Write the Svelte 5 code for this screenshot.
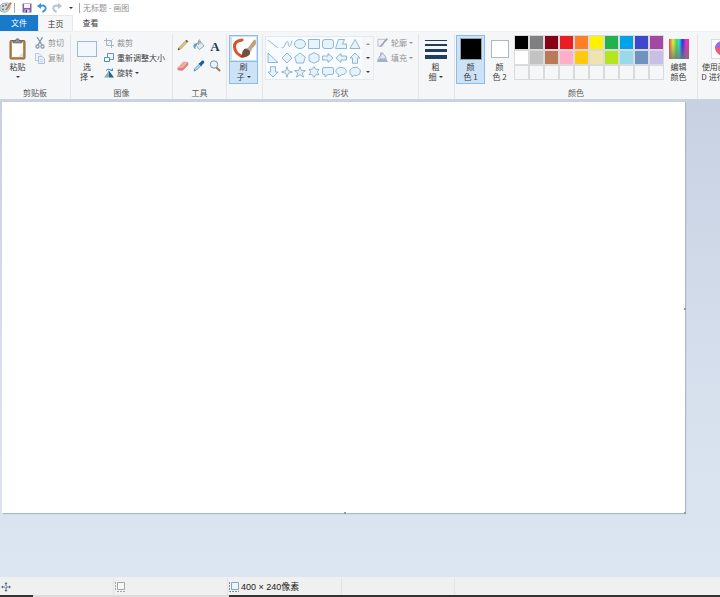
<script lang="ts">
	const palette = [
		'#000000', '#7f7f7f', '#880015', '#ed1c24', '#ff7f27', '#fff200', '#22b14c', '#00a2e8', '#3f48cc', '#a349a4',
		'#ffffff', '#c3c3c3', '#b97a57', '#ffaec9', '#ffc90e', '#efe4b0', '#b5e61d', '#99d9ea', '#7092be', '#c8bfe7',
		'', '', '', '', '', '', '', '', '', ''
	];

	const shapes = [
		{ name: '直线', d: 'M1 2L11 10' },
		{ name: '曲线', d: 'M0.5 9.5C3 11 4 6 5.5 4C8 1 6.500 9 8.500 8.500C10.500 8 10 3 11.500 2.500' },
		{ name: '椭圆形', d: 'M0.5 6A5.500 4.500 0 1 1 11.500 6A5.500 4.500 0 1 1 0.5 6Z' },
		{ name: '矩形', d: 'M0.5 1.500H11.500V10.500H0.5Z' },
		{ name: '圆角矩形', d: 'M3 1.500H9Q11.500 1.500 11.500 4V8Q11.500 10.500 9 10.500H3Q0.5 10.500 0.5 8V4Q0.5 1.500 3 1.500Z' },
		{ name: '多边形', d: 'M3.500 1.500H9.500L7.500 6H11.500V10.500H0.5Z' },
		{ name: '三角形', d: 'M6 1.500L11 10.500H1Z' },
		{ name: '直角三角形', d: 'M1 1V10.500H11Z' },
		{ name: '菱形', d: 'M6 1L11 6L6 11L1 6Z' },
		{ name: '五边形', d: 'M6 1L11.300 5L9.500 11H2.500L0.700 5Z' },
		{ name: '六边形', d: 'M6 0.700L11 3.200V8.800L6 11.300L1 8.800V3.200Z' },
		{ name: '右箭头', d: 'M0.5 4H6V1.500L11 6L6 10.500V8H0.5Z' },
		{ name: '左箭头', d: 'M11.500 4H6V1.500L1 6L6 10.500V8H11.500Z' },
		{ name: '向上箭头', d: 'M6 1L11 6H8.500V11.300H3.500V6H1Z' },
		{ name: '向下箭头', d: 'M6 11L11 6H8.500V0.700H3.500V6H1Z' },
		{ name: '四角星形', d: 'M6 0.700L7.300 4.700L11.300 6L7.300 7.300L6 11.300L4.700 7.300L0.700 6L4.700 4.700Z' },
		{ name: '五角星形', d: 'M6 0.700L7.400 4.600H11.500L8.200 7L9.500 11.200L6 8.600L2.500 11.200L3.800 7L0.500 4.600H4.600Z' },
		{ name: '六角星形', d: 'M6 0.500L7.700 3.300H11L9.300 6L11 8.700H7.700L6 11.500L4.300 8.700H1L2.700 6L1 3.300H4.300Z' },
		{ name: '圆角矩形标注', d: 'M2 1.500H10Q11.500 1.500 11.500 3V7Q11.500 8.500 10 8.500H6L3 11V8.500H2Q0.5 8.500 0.5 7V3Q0.5 1.500 2 1.500Z' },
		{ name: '椭圆形标注', d: 'M3.500 8.300C-0.500 6.800 0 1.500 6 1.500C13 1.500 13 8.700 6.500 8.700L3 11Z' },
		{ name: '云形标注', d: 'M3 9Q0.5 8.800 1 6.500Q0 3.500 2.500 3Q3.500 0.700 6 1.500Q9 0.500 9.700 2.700Q12.300 3.500 11.200 6Q11.500 8.800 8.500 9Q7 10.200 5.300 9.200L3 11Z' }
	];

	let color1 = $state('#000000');
	let color2 = $state('#ffffff');
	let activeTab = $state('home');
	let canvasWidth = 400;
	let canvasHeight = 240;

	function pickColor(color: string) {
		if (color) color1 = color;
	}

	function pickBackground(e: MouseEvent, color: string) {
		e.preventDefault();
		if (color) color2 = color;
	}
</script>

<div class="window">
	<header class="titlebar">
		<svg width="13" height="13" viewBox="0 0 13 13">
			<path d="M0 5Q1 2 6 2Q11 2 10 7Q8 12 3 11Q0 11 0 8Z" fill="#c9dbe3" stroke="#8d9da6" stroke-width=".7" />
			<circle cx="3" cy="5" r="1" fill="#d05a50" />
			<circle cx="3" cy="8.500" r="1" fill="#4c9c63" />
			<circle cx="6" cy="4" r="1" fill="#4b82c4" />
			<path d="M5 9L10 1L12 2L7 9Z" fill="#b68a50" />
		</svg>
		<span class="bar first"></span>
		<button class="quick" aria-label="保存">
			<svg width="10" height="10" viewBox="0 0 10 10">
				<path d="M.5 .5H9.500V9.500H.5Z" fill="#7f62a8" />
				<path d="M2 1H8V5H2Z" fill="#f5f2fa" />
				<path d="M2.500 6.500H7.500V9.500H2.500Z" fill="#ddd4ea" />
				<path d="M3.500 7H5V9.500H3.500Z" fill="#503878" />
			</svg>
		</button>
		<button class="quick" aria-label="撤消">
			<svg width="10" height="10" viewBox="0 0 10 10">
				<path d="M3 3C7 1.500 9 3.500 8.500 6Q8 8 5.500 9" fill="none" stroke="#3b94d4" stroke-width="2" />
				<path d="M0 3L4 0V6Z" fill="#3b94d4" />
			</svg>
		</button>
		<button class="quick" aria-label="重做">
			<svg width="10" height="10" viewBox="0 0 10 10">
				<path d="M7 3C3 1.500 1 3.500 1.500 6Q2 8 4.500 9" fill="none" stroke="#b6c0cf" stroke-width="2" />
				<path d="M10 3L6 0V6Z" fill="#b6c0cf" />
			</svg>
		</button>
		<button class="quick narrow" aria-label="自定义快速访问工具栏"><i class="arrow"></i></button>
		<span class="bar"></span>
		<span class="title">无标题 - 画图</span>
	</header>

	<nav class="tabs">
		<button class="tab file">文件</button>
		<button class="tab" class:active={activeTab === 'home'} onclick={() => (activeTab = 'home')}>主页</button>
		<button class="tab" class:active={activeTab === 'view'} onclick={() => (activeTab = 'view')}>查看</button>
	</nav>

	<div class="ribbon">
		<section class="group clipboard">
			<div class="content">
				<button class="large">
					<span class="picture">
						<svg width="17" height="22" viewBox="0 0 17 22">
							<rect x="1" y="2.500" width="15" height="18.500" rx="1" fill="#b98b52" stroke="#8c6535" />
							<path d="M3 4.500H14V19H3Z" fill="#fdfdfd" />
							<path d="M9 19H14V14Z" fill="#dde3ea" />
							<path d="M4.500 5V3H6.500Q6.500 .7 8.500 .7T10.500 3H12.500V5Z" fill="#8b929a" stroke="#5f666d" stroke-width=".7" />
						</svg>
					</span>
					<span>粘贴</span>
					<i class="arrow low"></i>
				</button>
				<div class="stack">
					<button class="small" disabled>
						<svg width="10" height="12" viewBox="0 0 10 12">
							<path d="M2 0L7 8M7.500 0L3 8" stroke="#8595ab" stroke-width="1.300" fill="none" />
							<circle cx="2.500" cy="9.500" r="1.600" fill="none" stroke="#8595ab" stroke-width="1.200" />
							<circle cx="7.500" cy="9.500" r="1.600" fill="none" stroke="#8595ab" stroke-width="1.200" />
						</svg>
						剪切
					</button>
					<button class="small" disabled>
						<svg width="10" height="12" viewBox="0 0 10 12">
							<path d="M.5 1.500H4L6 3.500V8.500H.5Z" fill="#eef3f9" stroke="#b9c8dc" />
							<path d="M3.500 4.500H7.500L9.500 6.500V11.500H3.500Z" fill="#e6eef8" stroke="#b1c1d7" />
							<path d="M5 7.500H8M5 9.500H8" stroke="#c7d5e7" />
						</svg>
						复制
					</button>
				</div>
			</div>
			<h2>剪贴板</h2>
		</section>

		<section class="group image">
			<div class="content">
				<button class="large">
					<span class="picture">
						<svg width="20" height="16" viewBox="0 0 20 16">
							<rect x=".5" y=".5" width="19" height="15" fill="#f1f7fd" stroke="#a1b8cf" />
						</svg>
					</span>
					<span>选<br />择<i class="arrow"></i></span>
				</button>
				<div class="stack">
					<button class="small" disabled>
						<svg width="10" height="10" viewBox="0 0 10 10">
							<path d="M2.500 0V7.500H10M0 2.500H7.500V10" fill="none" stroke="#a4b3c9" />
							<path d="M3 7L9.500 .5" stroke="#b8c4d6" stroke-width=".7" />
						</svg>
						裁剪
					</button>
					<button class="small">
						<svg width="10" height="10" viewBox="0 0 10 10">
							<path d="M3.500 .5H9.500V6.500H3.500Z" fill="#eaf5fd" stroke="#6f93b5" />
							<path d="M.5 4.500H5.500V8.500H.5Z" fill="#fff" stroke="#4f8ebc" />
						</svg>
						重新调整大小
					</button>
					<button class="small">
						<svg width="10" height="10" viewBox="0 0 10 10">
							<path d="M0 9.500H4V4Z" fill="#8da8bd" />
							<path d="M4.500 2V9.500H10Z" fill="#24668b" />
							<path d="M2 2.500Q4 0 7 2" fill="none" stroke="#3793c9" />
							<path d="M6 3H9V0Z" fill="#3793c9" />
						</svg>
						<span>旋转<i class="arrow"></i></span>
					</button>
				</div>
			</div>
			<h2>图像</h2>
		</section>

		<section class="group tools">
			<div class="content tool-grid">
				<button aria-label="铅笔">
					<svg width="12" height="12" viewBox="0 0 12 12">
						<path d="M1 11L2 8.500L9.500 1L11 2.500L3.500 10Z" fill="#e6c979" stroke="#94753d" stroke-width=".6" />
						<path d="M1 11L1.700 9L3 10.300Z" fill="#44403a" />
						<path d="M8.500 2L9.500 1L11 2.500L10 3.500Z" fill="#665a4a" />
					</svg>
				</button>
				<button aria-label="用颜色填充">
					<svg width="12" height="12" viewBox="0 0 12 12">
						<path d="M2.500 5.500L7 2L11 7L6.500 10.500Z" fill="#e4ebf1" stroke="#8796a4" stroke-width=".8" />
						<path d="M5.500 6V1.500Q6 0 7 1.500V5" fill="none" stroke="#8796a4" stroke-width=".8" />
						<path d="M.5 8Q0 4 3 4.500L6 4Q2 6 2.500 10Q1 10 .5 8Z" fill="#5f9ecb" />
					</svg>
				</button>
				<button class="text-tool" aria-label="文本">A</button>
				<button aria-label="橡皮擦">
					<svg width="12" height="12" viewBox="0 0 12 12">
						<path d="M.7 8L6.500 2L11 2.500L11 5L5.500 10.500L1 10Z" fill="#e67f7c" stroke="#d17372" stroke-width=".5" />
						<path d="M.7 8L5.500 8L11 2.500L6.500 2Z" fill="#f3a9a5" />
					</svg>
				</button>
				<button aria-label="颜色选取器">
					<svg width="12" height="12" viewBox="0 0 12 12">
						<path d="M1 11L2 8.500L6.500 4L8 5.500L3.500 10Z" fill="#bce0f5" stroke="#427da8" stroke-width=".8" />
						<path d="M5.500 3.500L6.500 3L9 .7Q11.500 0 11.300 2.700L9 5L8.500 6.500Z" fill="#245b91" />
					</svg>
				</button>
				<button aria-label="放大镜">
					<svg width="12" height="12" viewBox="0 0 12 12">
						<path d="M7.500 7.500L10.500 10.500" stroke="#997c62" stroke-width="2" stroke-linecap="round" />
						<circle cx="5" cy="4.500" r="3.700" fill="#e8f4fb" stroke="#7c91a1" stroke-width="1" />
					</svg>
				</button>
			</div>
			<h2>工具</h2>
		</section>

		<section class="group brushes">
			<div class="content">
				<button class="large checked split">
					<span class="picture">
						<svg width="24" height="23" viewBox="0 0 24 23">
							<path d="M0 0H24V23H0Z" fill="#fafcfe" />
							<path d="M10 3Q2 4 2.500 10T9 19Q14 20 15 16" fill="none" stroke="#d95329" stroke-width="3" stroke-linecap="round" />
							<path d="M16 11L21 4Q23 1 24 4V7L18 14Z" fill="#c3a179" />
							<path d="M14 12L17 10L20 13L17 16Z" fill="#aab0b5" />
							<path d="M10 18Q10 12 14 11.500Q19 13 18 17Q15 21 8 20Z" fill="#785039" />
						</svg>
					</span>
					<span>刷<br />子<i class="arrow"></i></span>
				</button>
			</div>
		</section>

		<section class="group shapes">
			<div class="content">
				<div class="gallery">
					<div class="shape-grid">
						{#each shapes as shape (shape.name)}
							<button aria-label={shape.name}>
								<svg width="12" height="12" viewBox="0 0 12 12"><path d={shape.d} /></svg>
							</button>
						{/each}
					</div>
					<div class="scroll">
						<button aria-label="向上滚动" disabled><i class="arrow up"></i></button>
						<button aria-label="向下滚动"><i class="arrow"></i></button>
						<button aria-label="更多形状"><i class="arrow more"></i></button>
					</div>
				</div>
				<div class="stack">
					<button class="small" disabled>
						<svg width="11" height="11" viewBox="0 0 12 12">
							<path d="M1 2.500H9L6 10H1Z" fill="#eef0f3" stroke="#b6bec9" />
							<path d="M2.500 10.500L10.500 1L12 2.500L4 11Z" fill="#9aa5b3" />
						</svg>
						<span>轮廓<i class="arrow"></i></span>
					</button>
					<button class="small" disabled>
						<svg width="11" height="11" viewBox="0 0 12 12">
							<path d="M2 6L6 1L10 6L6 9Z" fill="#e0e5ef" stroke="#9eabc0" />
							<path d="M1 7H10L12 11H0Z" fill="#a4b1c8" />
							<path d="M4 5V1H6" fill="none" stroke="#9eabc0" />
						</svg>
						<span>填充<i class="arrow"></i></span>
					</button>
				</div>
			</div>
			<h2>形状</h2>
		</section>

		<section class="group size">
			<div class="content">
				<button class="large">
					<span class="picture">
						<svg width="22" height="20" viewBox="0 0 22 20">
							<path d="M0 1H22V2H0ZM0 5H22V7H0ZM0 10H22V13H0ZM0 16H22V20H0Z" fill="#203f5f" />
						</svg>
					</span>
					<span>粗<br />细<i class="arrow"></i></span>
				</button>
			</div>
		</section>

		<section class="group colors">
			<div class="content">
				<button class="large checked">
					<span class="picture"><span class="well first" style:background={color1}></span></span>
					<span>颜<br />色 1</span>
				</button>
				<button class="large">
					<span class="picture"><span class="well" style:background={color2}></span></span>
					<span>颜<br />色 2</span>
				</button>
				<div class="palette">
					{#each palette as color, i (i)}
						<button
							aria-label={color || '自定义颜色'}
							style:background={color || '#f5f6f7'}
							onclick={() => pickColor(color)}
							oncontextmenu={(e) => pickBackground(e, color)}
						></button>
					{/each}
				</div>
				<button class="large">
					<span class="picture"><span class="rainbow"></span></span>
					<span>编辑<br />颜色</span>
				</button>
			</div>
			<h2>颜色</h2>
		</section>

		<section class="group paint3d">
			<div class="content">
				<button class="large">
					<span class="picture">
						<svg width="20" height="20" viewBox="0 0 20 20">
							<rect x=".5" y=".5" width="19" height="19" fill="#fdfdfe" stroke="#d9dce3" />
							<path d="M10 2Q4 4 4 9H10Z" fill="#9c6bd8" />
							<path d="M4 9Q4 13 10 17V9Z" fill="#ee5c74" />
							<path d="M10 2Q16 4 16 9H10Z" fill="#439fe0" />
							<path d="M16 9Q16 13 10 17V9Z" fill="#f4ad41" />
						</svg>
					</span>
					<span>使用画图 3<br />D 进行编辑</span>
				</button>
			</div>
		</section>
	</div>

	<main class="workspace">
		<div class="canvas">
			<span class="handle right"></span>
			<span class="handle bottom"></span>
			<span class="handle corner"></span>
		</div>
	</main>

	<footer class="status">
		<div class="cell">
			<svg width="10" height="10" viewBox="0 0 10 10">
				<path d="M5 1V9M1 5H9" stroke="#596b80" stroke-dasharray="3 1" />
				<path d="M3.500 2L5 0L6.500 2ZM3.500 8L5 10L6.500 8ZM2 3.500L0 5L2 6.500ZM8 3.500L10 5L8 6.500Z" fill="#596b80" />
			</svg>
		</div>
		<div class="cell">
			<svg width="10" height="10" viewBox="0 0 10 10">
				<path d="M2.500 .5H9.500V7.500H2.500Z" fill="#f7f7f8" stroke="#a4a7ac" />
				<path d="M.5 0V8M2 9.500H10" stroke="#a5a8ad" stroke-dasharray="2 1" />
			</svg>
		</div>
		<div class="cell">
			<svg width="10" height="10" viewBox="0 0 10 10">
				<path d="M2.500 .5H9.500V7.500H2.500Z" fill="#eaf6fd" stroke="#8da6ba" />
				<path d="M.5 0V9.500H10V7" fill="none" stroke="#7a8d9e" stroke-dasharray="2 1" />
			</svg>
			<span>{canvasWidth} × {canvasHeight}像素</span>
		</div>
		<div class="cell"></div>
		<div class="cell last"></div>
	</footer>
	<div class="taskbar"><span></span><span></span><span></span></div>
</div>

<style>
	:global(body) {
		margin: 0;
	}

	.window {
		display: flex;
		flex-direction: column;
		min-height: 100vh;
		background: #fff;
		color: #3c3c3c;
		font: 8px/10px 'Noto Sans CJK SC', sans-serif;
		overflow: hidden;
	}

	button {
		display: flex;
		align-items: center;
		justify-content: center;
		box-sizing: border-box;
		margin: 0;
		padding: 0;
		border: 0;
		background: none;
		color: inherit;
		font: inherit;
		white-space: nowrap;
	}

	button:disabled {
		color: #929292;
	}

	svg {
		display: block;
		flex-shrink: 0;
	}

	.arrow {
		display: inline-block;
		width: 0;
		height: 0;
		margin-left: 2px;
		border: 2px solid transparent;
		border-top-color: currentColor;
		border-bottom: 0;
		vertical-align: 2px;
	}

	.titlebar {
		display: flex;
		align-items: center;
		height: 15px;
		color: #929292;
	}

	.bar {
		width: 1px;
		height: 10px;
		margin: 0 3px 0 1px;
		background: #aaa;
	}

	.bar.first {
		margin-right: 4px;
	}

	.quick {
		width: 15px;
		height: 15px;
		color: #333;
	}

	.quick.narrow {
		width: 14px;
	}

	.quick .arrow {
		margin: 0;
	}

	.tabs {
		display: flex;
		height: 16px;
	}

	.tab {
		width: 35px;
	}

	.tab.file {
		width: 38px;
		background: #1979ca;
		color: #fff;
	}

	.tab.active {
		background: #f5f6f7;
		border: 1px solid #e6e8eb;
		border-bottom: 0;
	}

	.ribbon {
		display: flex;
		box-sizing: border-box;
		padding-top: 2px;
		background: #f5f6f7;
		border-top: 1px solid #eceef0;
		border-bottom: 2px solid #cbd3df;
		overflow: hidden;
	}

	.group {
		display: flex;
		flex-direction: column;
		flex-shrink: 0;
		box-sizing: border-box;
		padding-top: 1px;
		border-right: 1px solid #e3e5e8;
	}

	.clipboard { width: 71px; }
	.image { width: 102px; }
	.tools { width: 54px; }
	.brushes { width: 36px; }
	.shapes { width: 156px; }
	.size { width: 36px; }
	.colors { width: 243px; }
	.paint3d { border: 0; }

	.content {
		display: flex;
		align-items: flex-start;
		height: 52px;
	}

	h2 {
		margin: 0;
		font-size: 8px;
		font-weight: 400;
		line-height: 12px;
		text-align: center;
		color: #5a5a5a;
	}

	.large {
		flex-direction: column;
		justify-content: flex-start;
		width: 29px;
		height: 49px;
		border: 1px solid transparent;
	}

	.picture {
		display: flex;
		align-items: center;
		justify-content: center;
		height: 26px;
		flex-shrink: 0;
	}

	.large.checked {
		background: #cce2f7;
		border-color: #8dbce6;
	}

	.split .picture {
		width: 100%;
		box-sizing: border-box;
		border-bottom: 1px solid #8dbce6;
	}

	.arrow.low {
		margin: 4px 0 0;
	}

	.stack {
		display: flex;
		flex-direction: column;
		align-items: flex-start;
	}

	.small {
		height: 15px;
		gap: 3px;
	}

	.clipboard .content {
		padding-left: 3px;
		gap: 3px;
	}

	.image .content {
		padding-left: 2px;
		gap: 3px;
	}

	.image .large {
		width: 28px;
	}

	.tool-grid {
		display: grid;
		grid-template-columns: repeat(3, 16px);
		grid-template-rows: repeat(2, 21px);
		padding: 4px 0 0 2px;
		box-sizing: border-box;
	}

	.text-tool {
		color: #203d61;
		font: bold 13px/16px 'Liberation Serif', serif;
	}

	.brushes .content,
	.colors .content {
		padding-left: 2px;
	}

	.shapes .content {
		padding-left: 2px;
		gap: 3px;
	}

	.gallery {
		display: flex;
		margin-top: 1px;
		border: 1px solid #e2eaf1;
	}

	.shape-grid {
		display: grid;
		grid-template-columns: repeat(7, 1fr);
		grid-auto-rows: 14px;
		width: 96px;
		background: #f8fcff;
	}

	.shape-grid path {
		fill: #e4f3fc;
		stroke: #7ea4c2;
		stroke-width: 0.8;
	}

	.shape-grid button:nth-child(-n + 2) path {
		fill: none;
	}

	.scroll {
		display: grid;
		grid-template-rows: repeat(3, 14px);
		width: 11px;
	}

	.scroll .arrow {
		margin: 0;
	}

	.arrow.up {
		transform: rotate(180deg);
	}

	.arrow.more {
		box-shadow: 0 -2px 0 -1px currentColor;
	}

	.size .content {
		padding-left: 2px;
	}

	.well {
		width: 16px;
		height: 16px;
		border: 1px solid #aeb6bf;
	}

	.well.first {
		width: 20px;
		height: 20px;
		border-color: #93a0ae;
	}

	.palette {
		display: grid;
		grid-template-columns: repeat(10, 15px);
		grid-auto-rows: 15px;
	}

	.palette button {
		border: 1px solid #d9dadc;
	}

	.rainbow {
		width: 20px;
		height: 20px;
		background:
			linear-gradient(transparent 20%, #777c),
			linear-gradient(90deg, #e84a40, #e8e83c 20%, #36da54 38%, #35d9df 50%, #2c35d7 67%, #de35d5 85%, #ed3c58);
	}

	.colors .content {
		padding-left: 1px;
	}

	.paint3d .large {
		width: 46px;
	}

	.workspace {
		display: flex;
		flex: 1;
		padding: 1px 35px 64px 2px;
		background: linear-gradient(#c7d1e2, #d8e2ef 70%, #dce6f2);
	}

	.canvas {
		position: relative;
		flex: 1;
		background: #fff;
		box-shadow: 1px 1px 1px #a9b6cc;
	}

	.handle {
		position: absolute;
		width: 2px;
		height: 2px;
		background: #8f9bad;
	}

	.handle.right {
		top: 50%;
		right: -1px;
	}

	.handle.bottom {
		left: 50%;
		bottom: -1px;
	}

	.handle.corner {
		right: -1px;
		bottom: -1px;
	}

	.status {
		display: flex;
		box-sizing: border-box;
		height: 18px;
		padding-top: 1px;
		background: #f0f0f0;
		font: 9px/12px 'Liberation Sans', 'Noto Sans CJK SC', sans-serif;
		color: #222;
	}

	.cell {
		display: flex;
		align-items: center;
		gap: 2px;
		box-sizing: border-box;
		width: 114px;
		padding-left: 1px;
		border-right: 1px solid #e2e3e5;
	}

	.cell.last {
		flex: 1;
		border: 0;
	}

	.cell:nth-child(4) {
		width: 113px;
	}

	.taskbar {
		display: grid;
		grid-template-columns: 33px 196px 1fr;
		height: 2px;
	}

	.taskbar span {
		background: #333;
	}

	.taskbar span:nth-child(2) {
		background: #dcdcdc;
	}
</style>
